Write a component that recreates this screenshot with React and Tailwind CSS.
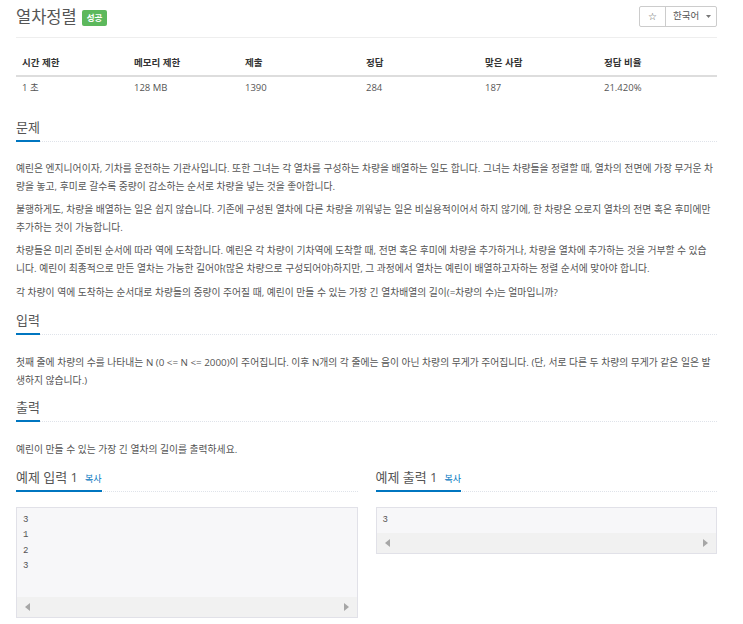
import React from "react";

const FONT = { fontFamily: '"Open Sans", "Noto Sans CJK KR", sans-serif' };

function Heading({ children, className = "" }) {
  return (
    <div className={"border-b border-dotted border-[#dfe3ea] " + className}>
      <div className="inline-block border-b-2 border-[#0076C0] mb-[-1px] pb-[5px]">
        <div className="h-[16px] leading-[16px] text-[13px] text-[#555]">{children}</div>
      </div>
    </div>
  );
}

function Lines({ lines }) {
  return (
    <p className="leading-[18.1px] text-[9.8px] text-[#555] mb-[5px]">
      {lines.map((l, i) => (
        <span key={i} className="block whitespace-nowrap">{l}</span>
      ))}
    </p>
  );
}

function Arrow({ dir }) {
  return (
    <svg width="5" height="8" viewBox="0 0 5 8">
      {dir === "l" ? (
        <polygon points="5,0 0,4 5,8" fill="#a6a6a6" />
      ) : (
        <polygon points="0,0 5,4 0,8" fill="#a6a6a6" />
      )}
    </svg>
  );
}

function Sample({ title, lines, contentH }) {
  return (
    <div>
      <div className="border-b border-dotted border-[#dfe3ea]">
        <div className="inline-block border-b-2 border-[#0076C0] mb-[-1px] pb-[5px]">
          <div className="h-[16px] leading-[16px] text-[13px] text-[#555] flex items-end gap-[7px]">
            <span>{title}</span>
            <span className="text-[9px] text-[#0076C0] leading-[12px]">복사</span>
          </div>
        </div>
      </div>
      <div className="mt-[15px] border border-[#e1e1e8] bg-[#f7f7f9]">
        <div
          className={"px-[6px] pt-[5px] text-[9px] leading-[15.5px] text-[#555] " + contentH}
          style={{ fontFamily: '"Liberation Mono", "DejaVu Sans Mono", monospace' }}
        >
          {lines.map((l, i) => (
            <div key={i}>{l}</div>
          ))}
        </div>
        <div className="h-[20px] bg-[#f1f1f1] flex items-center justify-between px-[8px]">
          <Arrow dir="l" />
          <Arrow dir="r" />
        </div>
      </div>
    </div>
  );
}

export default function App() {
  const cols = [
    ["시간 제한", "1 초"],
    ["메모리 제한", "128 MB"],
    ["제출", "1390"],
    ["정답", "284"],
    ["맞은 사람", "187"],
    ["정답 비율", "21.420%"],
  ];
  return (
    <div className="w-[743px] h-[624px] overflow-hidden bg-white pl-[16px]" style={FONT}>
      <div className="w-[701px]">
        {/* Title */}
        <div className="flex items-center justify-between pt-[6px] pb-[10px] border-b border-[#eee]">
          <div className="flex items-center h-[21px]">
            <span className="text-[16.5px] leading-[21px] text-[#555]">열차정렬</span>
            <span className="ml-[5px] bg-[#5cb85c] text-white text-[8.5px] font-bold leading-[16px] h-[16px] px-[5px] rounded-[2px] mt-[2px]">
              성공
            </span>
          </div>
          <div className="flex h-[21px] border border-[#ccc] rounded-[2px] text-[9.5px] text-[#555]">
            <div className="w-[26px] flex items-center justify-center border-r border-[#ccc] text-[10px]" style={{ fontFamily: '"DejaVu Sans", sans-serif' }}>
              ☆
            </div>
            <div className="w-[50px] flex items-center pl-[7px] gap-[7px]">
              <span>한국어</span>
              <svg width="5" height="3" viewBox="0 0 5 3">
                <polygon points="0,0 5,0 2.5,3" fill="#777" />
              </svg>
            </div>
          </div>
        </div>

        {/* Table */}
        <div className="grid grid-cols-[112px_111px_121px_119px_119px_1fr] text-[9.5px] mt-[19px]">
          {cols.map(([h]) => (
            <div key={h} className="px-[6px] leading-[12px] pb-[6px] border-b-2 border-[#ddd] font-bold text-[#333]">
              {h}
            </div>
          ))}
          {cols.map(([h, v]) => (
            <div key={h + "v"} className="px-[6px] leading-[12px] pt-[5px] text-[#555]">
              {v}
            </div>
          ))}
        </div>

        {/* 문제 */}
        <Heading className="mt-[20px]">문제</Heading>
        <div className="mt-[18px]">
          <Lines
            lines={[
              "예린은 엔지니어이자, 기차를 운전하는 기관사입니다. 또한 그녀는 각 열차를 구성하는 차량을 배열하는 일도 합니다. 그녀는 차량들을 정렬할 때, 열차의 전면에 가장 무거운 차",
              "량을 놓고, 후미로 갈수록 중량이 감소하는 순서로 차량을 넣는 것을 좋아합니다.",
            ]}
          />
          <Lines
            lines={[
              "불행하게도, 차량을 배열하는 일은 쉽지 않습니다. 기존에 구성된 열차에 다른 차량을 끼워넣는 일은 비실용적이어서 하지 않기에, 한 차량은 오로지 열차의 전면 혹은 후미에만",
              "추가하는 것이 가능합니다.",
            ]}
          />
          <Lines
            lines={[
              "차량들은 미리 준비된 순서에 따라 역에 도착합니다. 예린은 각 차량이 기차역에 도착할 때, 전면 혹은 후미에 차량을 추가하거나, 차량을 열차에 추가하는 것을 거부할 수 있습",
              "니다. 예린이 최종적으로 만든 열차는 가능한 길어야(많은 차량으로 구성되어야)하지만, 그 과정에서 열차는 예린이 배열하고자하는 정렬 순서에 맞아야 합니다.",
            ]}
          />
          <Lines
            lines={[
              "각 차량이 역에 도착하는 순서대로 차량들의 중량이 주어질 때, 예린이 만들 수 있는 가장 긴 열차배열의 길이(=차량의 수)는 얼마입니까?",
            ]}
          />
        </div>

        {/* 입력 */}
        <Heading className="mt-[4px]">입력</Heading>
        <div className="mt-[19px]">
          <Lines
            lines={[
              "첫째 줄에 차량의 수를 나타내는 N (0 <= N <= 2000)이 주어집니다. 이후 N개의 각 줄에는 음이 아닌 차량의 무게가 주어집니다. (단, 서로 다른 두 차량의 무게가 같은 일은 발",
              "생하지 않습니다.)",
            ]}
          />
        </div>

        {/* 출력 */}
        <Heading className="-mt-[1px]">출력</Heading>
        <div className="mt-[19px]">
          <Lines lines={["예린이 만들 수 있는 가장 긴 열차의 길이를 출력하세요."]} />
        </div>

        {/* Samples */}
        <div className="grid grid-cols-2 gap-[18px] mt-[5px]">
          <Sample title="예제 입력 1" lines={["3", "1", "2", "3"]} contentH="h-[89px]" />
          <Sample title="예제 출력 1" lines={["3"]} contentH="h-[25px]" />
        </div>
      </div>
    </div>
  );
}
